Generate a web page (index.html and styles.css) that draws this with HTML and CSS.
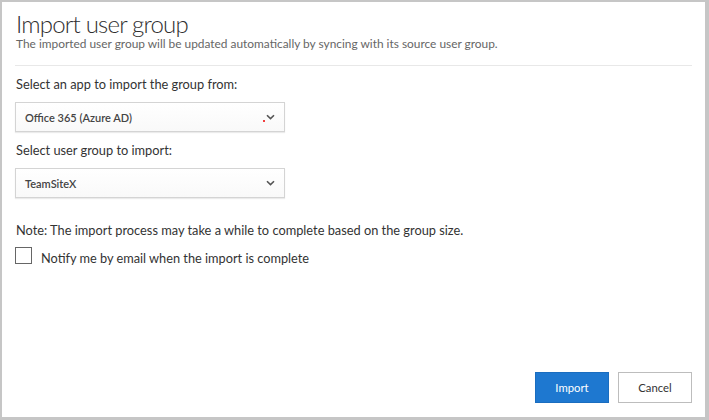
FILE: index.html
```html
<!DOCTYPE html>
<html lang="en">
<head>
<meta charset="utf-8">
<title>Import user group</title>
<link rel="stylesheet" href="styles.css">
</head>
<body>
<div class="panel">
  <header class="head">
    <h1 class="title">Import user group</h1>
    <p class="subtitle">The imported user group will be updated automatically by syncing with its source user group.</p>
  </header>
  <div class="field">
    <label class="label">Select an app to import the group from:</label>
    <div class="select">
      <span class="select-text">Office 365 (Azure AD)</span>
      <span class="red-dot"></span>
      <svg class="chev" width="9" height="6" viewBox="0 0 9 6"><path d="M1 1.2 L4.5 4.6 L8 1.2" fill="none" stroke="#555" stroke-width="1.6"/></svg>
    </div>
  </div>
  <div class="field">
    <label class="label">Select user group to import:</label>
    <div class="select">
      <span class="select-text">TeamSiteX</span>
      <svg class="chev" width="9" height="6" viewBox="0 0 9 6"><path d="M1 1.2 L4.5 4.6 L8 1.2" fill="none" stroke="#555" stroke-width="1.6"/></svg>
    </div>
  </div>
  <p class="note">Note: The import process may take a while to complete based on the group size.</p>
  <label class="check-row">
    <span class="checkbox"></span>
    <span class="check-label">Notify me by email when the import is complete</span>
  </label>
  <footer class="footer">
    <button class="btn btn-primary">Import</button>
    <button class="btn btn-default">Cancel</button>
  </footer>
</div>
</body>
</html>
```
FILE: styles.css
```css
html, body {
  margin: 0;
  padding: 0;
}
body {
  background: #c6c6c6;
  width: 709px;
  height: 420px;
  padding: 2px 4px 3px 2px;
  box-sizing: border-box;
  font-family: "Lato", "Open Sans", sans-serif;
  color: #333;
}
.panel {
  background: #fff;
  height: 100%;
  box-sizing: border-box;
  padding: 0 13px 0 13px;
  display: flex;
  flex-direction: column;
}
.head {
  border-bottom: 1px solid #e8e8e8;
  padding-bottom: 14px;
}
.title {
  margin: 10px 0 0 1px;
  font-size: 24px;
  font-weight: 300;
  letter-spacing: -0.8px;
  line-height: 23px;
  color: #2f2f2f;
}
.subtitle {
  margin: 1px 0 0 1px;
  font-size: 11.9px;
  line-height: 15px;
  color: #666;
}
.field {
  display: flex;
  flex-direction: column;
}
.label {
  margin: 8px 0 0 1px;
  font-size: 12.8px;
  line-height: 20px;
  color: #333;
}
.select {
  margin-top: 8px;
  width: 270px;
  height: 30px;
  box-sizing: border-box;
  border: 1px solid #d4d4d4;
  box-shadow: 0 1px 1px rgba(0,0,0,0.08);
  background: linear-gradient(#fff, #f9f9f9);
  display: flex;
  align-items: center;
  padding: 0 9px 0 9px;
  position: relative;
}
.select-text {
  flex: 1;
  font-size: 11px;
  font-weight: 600;
  color: #444;
}
.red-dot {
  position: absolute;
  left: 247px;
  top: 17px;
  width: 2px;
  height: 2px;
  border-radius: 1px;
  background: #e00;
}
.chev {
  display: block;
}
.note {
  margin: 23px 0 0 1px;
  font-size: 12.8px;
  line-height: 18px;
  color: #333;
}
.check-row {
  display: flex;
  align-items: flex-start;
  margin-top: 8px;
}
.checkbox {
  width: 17px;
  height: 17px;
  box-sizing: border-box;
  border: 1px solid #666;
  background: #fff;
}
.check-label {
  margin: 1px 0 0 9px;
  font-size: 12.75px;
  line-height: 20px;
  color: #333;
}
.footer {
  margin-top: auto;
  margin-bottom: 14px;
  display: flex;
  justify-content: flex-end;
  gap: 9px;
}
.btn {
  width: 74px;
  height: 31px;
  box-sizing: border-box;
  font-family: inherit;
  font-size: 11.3px;
  padding: 0;
  cursor: pointer;
}
.btn-primary {
  background: #1e78d0;
  border: 1px solid #1a6dbf;
  color: #fff;
}
.btn-default {
  background: #fff;
  border: 1px solid #bdbdbd;
  color: #333;
}
```
